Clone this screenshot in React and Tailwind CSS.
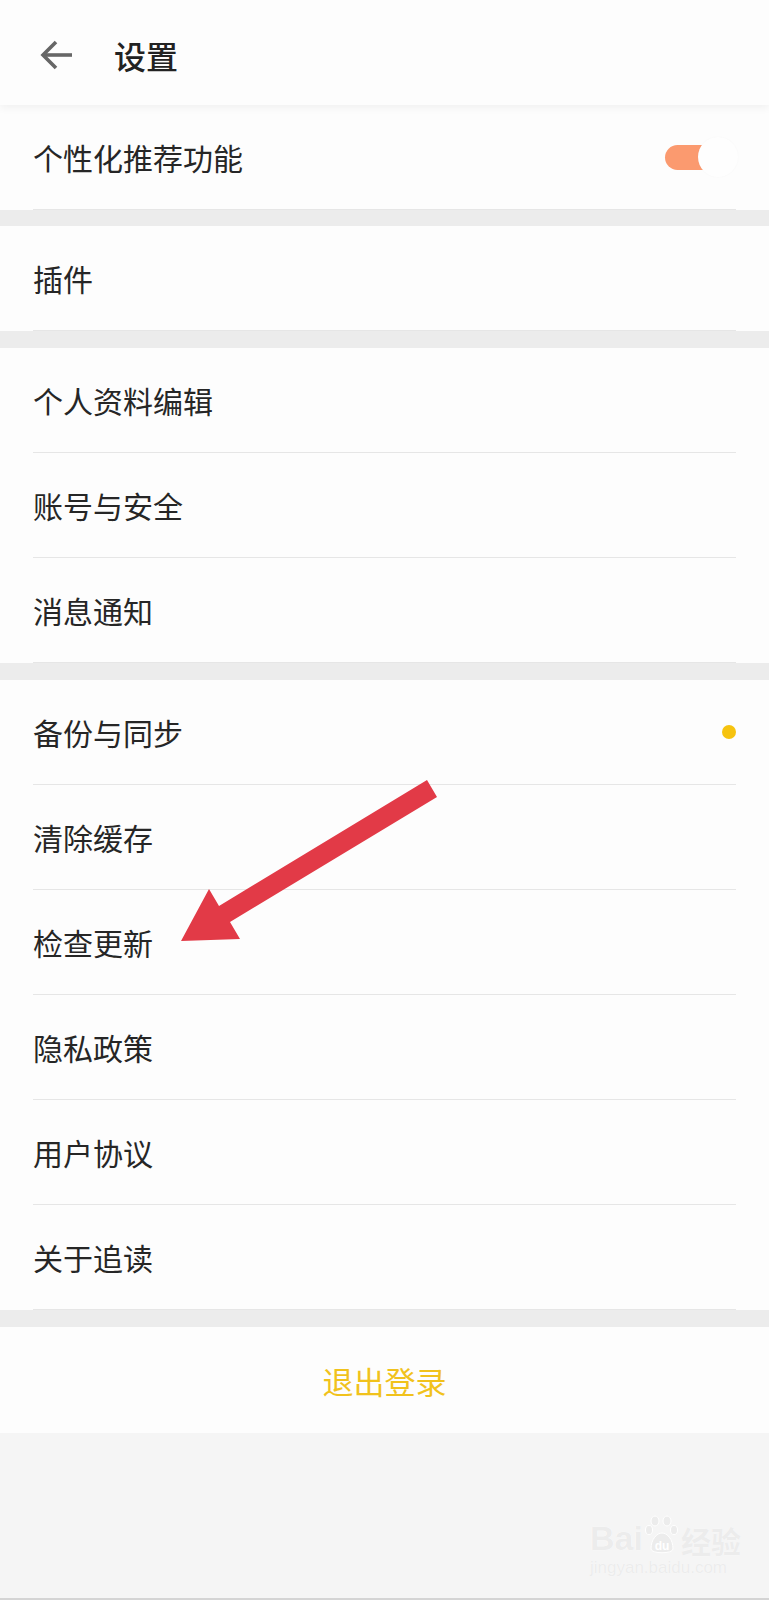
import React from "react";

const font = { fontFamily: '"Noto Sans CJK SC", "Noto Sans", sans-serif' };

function Row({ label, right }) {
  return (
    <div className="h-[105px] flex flex-col bg-[#fdfdfd]">
      <div className="flex-1 flex items-center justify-between pl-[33px] pr-[31px]">
        <span className="text-[30px] leading-none text-[#262626]">{label}</span>
        {right}
      </div>
      <div className="mx-[33px] h-px bg-[#e6e6e6]" />
    </div>
  );
}

function Band({ h }) {
  return <div className={`${h} bg-[#ececec]`} />;
}

function Toggle() {
  return (
    <div className="relative w-[74px] h-[40px] -mr-[1px]">
      <div className="absolute left-0 top-[8px] w-[56px] h-[25px] rounded-full bg-[#fb9a6f]" />
      <div className="absolute left-[33px] top-0 w-[40px] h-[40px] rounded-full bg-[#fefefe] shadow-[0_0_2px_rgba(0,0,0,0.03)]" />
    </div>
  );
}

export default function App() {
  return (
    <div className="relative w-[769px] h-[1600px] bg-[#f5f5f5] overflow-hidden" style={font}>
      {/* Header */}
      <div className="relative z-10 h-[105px] bg-[#fdfdfd] flex items-center pl-[40px] pt-[5px] shadow-[0_3px_8px_rgba(0,0,0,0.05)]">
        <svg width="32" height="30" viewBox="0 0 32 30" fill="none" stroke="#666666" strokeWidth="3.6" strokeLinecap="butt" strokeLinejoin="miter">
          <path d="M32 15H3" />
          <path d="M16 2L3 15L16 28" />
        </svg>
        <span className="ml-[42px] text-[32px] leading-none font-medium text-[#222]">设置</span>
      </div>

      <Row label="个性化推荐功能" right={<Toggle />} />
      <Band h="h-[16px]" />
      <Row label="插件" />
      <Band h="h-[17px]" />
      <Row label="个人资料编辑" />
      <Row label="账号与安全" />
      <Row label="消息通知" />
      <Band h="h-[17px]" />
      <Row label="备份与同步" right={<div className="w-[14px] h-[14px] rounded-full bg-[#f6c30f] mr-[2px]" />} />
      <Row label="清除缓存" />
      <Row label="检查更新" />
      <Row label="隐私政策" />
      <Row label="用户协议" />
      <Row label="关于追读" />
      <Band h="h-[17px]" />
      <div className="h-[106px] bg-[#fdfdfd] flex items-center justify-center">
        <span className="text-[31px] leading-none text-[#f1c21c]">退出登录</span>
      </div>
      <div className="absolute left-0 right-0 bottom-0 h-[2px] bg-[#d4d4d4]" />

      {/* Red annotation arrow */}
      <svg className="absolute inset-0 pointer-events-none" width="769" height="1600" viewBox="0 0 769 1600">
        <polygon
          points="427,780 437,797 230,922 240,939 181,941 209,889 219,906"
          fill="#e23a47"
        />
      </svg>

      {/* Watermark */}
      <div className="absolute left-[590px] top-[1515px] flex flex-col items-start pointer-events-none select-none">
        <div className="flex items-end gap-[2px]">
          <span className="text-[34px] leading-none font-bold text-[#ececec]" style={{ fontFamily: '"Liberation Sans", Arial, sans-serif', textShadow: "0 0 1px #ffffff, 0 0 1px #ffffff" }}>Bai</span>
          <svg width="34" height="40" viewBox="0 0 34 40">
            <ellipse cx="10" cy="6" rx="4" ry="5" fill="#ececec" stroke="#fff" />
            <ellipse cx="22" cy="6" rx="4" ry="5" fill="#ececec" stroke="#fff" />
            <ellipse cx="4" cy="15" rx="3.5" ry="4.5" fill="#ececec" stroke="#fff" />
            <ellipse cx="29" cy="15" rx="3.5" ry="4.5" fill="#ececec" stroke="#fff" />
            <path d="M6 34 C6 24 12 18 17 18 C22 18 28 24 28 34 C28 39 6 39 6 34Z" fill="#ececec" stroke="#fff" />
            <text x="17" y="35" textAnchor="middle" fontSize="12" fontWeight="bold" fill="#ffffff" fontFamily="Liberation Sans, Arial, sans-serif">du</text>
          </svg>
          <span className="text-[30px] leading-none font-bold text-[#ececec]" style={{ textShadow: "0 0 1px #ffffff" }}>经验</span>
        </div>
        <span className="mt-[4px] text-[17px] leading-none text-[#ececec]" style={{ fontFamily: '"Liberation Sans", Arial, sans-serif', textShadow: "0 0 1px #ffffff" }}>jingyan.baidu.com</span>
      </div>
    </div>
  );
}
